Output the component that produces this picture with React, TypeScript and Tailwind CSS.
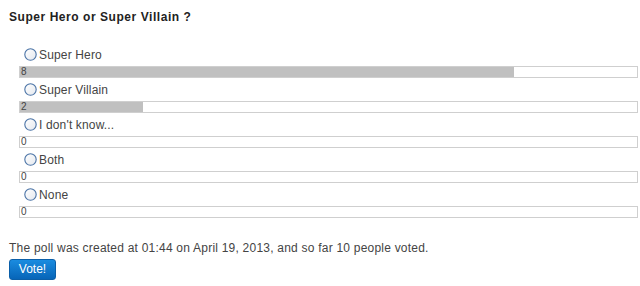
import React from "react"

const options = [
  { label: "Super Hero", votes: 8 },
  { label: "Super Villain", votes: 2 },
  { label: "I don't know...", votes: 0 },
  { label: "Both", votes: 0 },
  { label: "None", votes: 0 },
]

const total = 10

function Radio() {
  return (
    <svg width="13" height="13" viewBox="0 0 13 13" className="shrink-0">
      <defs>
        <linearGradient id="rg" x1="0" y1="0" x2="1" y2="1">
          <stop offset="0" stopColor="#ffffff" />
          <stop offset="1" stopColor="#e4e8ee" />
        </linearGradient>
      </defs>
      <circle cx="6.5" cy="6.5" r="5.7" fill="url(#rg)" stroke="#4a73a6" strokeWidth="1.1" />
    </svg>
  )
}

export default function App() {
  return (
    <div className="w-[640px] h-[286px] bg-white font-['Liberation_Sans',Arial,sans-serif] text-[#444]">
      <div className="pt-[10px] pl-[9px]">
        <h2 className="text-[12px] leading-[15px] font-bold tracking-[0.55px] text-[#222]">Super Hero or Super Villain ?</h2>
      </div>

      <div className="mt-[18px] ml-[19px] mr-[2px]">
        {options.map((o) => (
          <div key={o.label}>
            <label className="flex items-center h-[23px] pl-[5px] gap-[2px] text-[12px] tracking-[0.15px]">
              <Radio />
              <span>{o.label}</span>
            </label>
            <div className="relative h-[12px] border border-[#cfcfcf] bg-white">
              <div className="h-full bg-[#c0c0c0]" style={{ width: `${(o.votes / total) * 100}%` }} />
              <span className="absolute inset-y-0 left-[1px] flex items-center text-[10px] leading-none text-[#444]">{o.votes}</span>
            </div>
          </div>
        ))}
      </div>

      <div className="pl-[9px] mt-[23px]">
        <p className="text-[12px] leading-[15px] tracking-[0.22px] text-[#444]">
          The poll was created at 01:44 on April 19, 2013, and so far 10 people voted.
        </p>
        <button className="mt-[3px] w-[47px] h-[21px] rounded-[3px] border border-[#0b5fa8] bg-gradient-to-b from-[#1a8ce0] to-[#0765b8] text-white text-[12px] leading-[19px]">
          Vote!
        </button>
      </div>
    </div>
  )
}
